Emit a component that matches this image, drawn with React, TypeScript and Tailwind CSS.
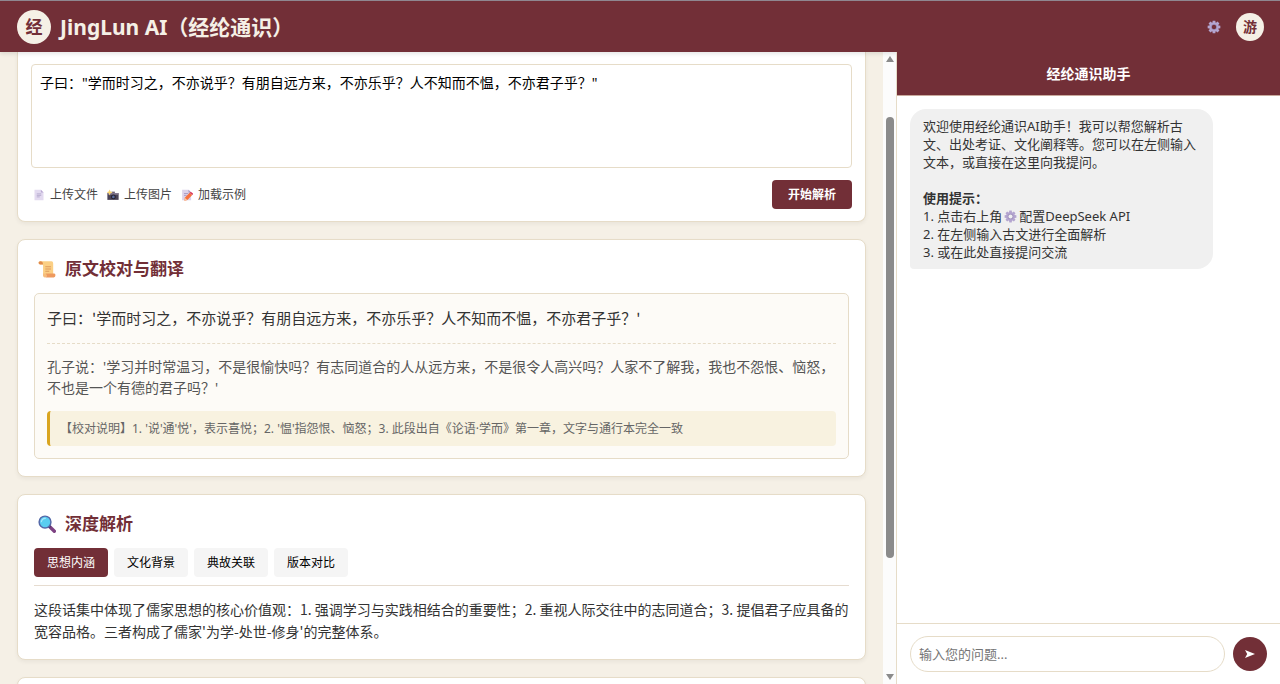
import { useState } from "react";
import type { ReactNode } from "react";

const GEAR_TEETH = [0, 45, 90, 135, 180, 225, 270, 315];

function GearIcon({ className, hole }: { className: string; hole: string }) {
  return (
    <svg viewBox="0 0 32 32" className={className} aria-hidden="true">
      <g fill="#b4a5cf">
        {GEAR_TEETH.map((angle) => (
          <path key={angle} d="M13 1.5h6l1.2 8h-8.4z" transform={`rotate(${angle} 16 16)`} />
        ))}
        <circle cx="16" cy="16" r="10.5" />
      </g>
      <circle cx="16" cy="16" r="7" fill="#9f90bd" />
      <circle cx="16" cy="16" r="5" fill={hole} />
    </svg>
  );
}

function FileIcon() {
  return (
    <svg viewBox="0 0 32 32" className="size-3" aria-hidden="true">
      <path d="M4 2h17l7 7v21H4z" fill="#e3daf0" />
      <path d="M21 2v7h7z" fill="#b9a8d2" />
      <path d="M10 13h12M10 17h12M10 21h8" stroke="#b3a6cb" strokeWidth="2.2" />
    </svg>
  );
}

function CameraIcon() {
  return (
    <svg viewBox="0 0 32 32" className="size-3" aria-hidden="true">
      <path d="M1 11h30v18H1z" fill="#4b4356" />
      <path d="M1 11h30v4H1z" fill="#8d8299" />
      <path d="M12 7h9v4h-9z" fill="#6c6278" />
      <circle cx="17" cy="21" r="6.5" fill="#241f2e" />
      <circle cx="17" cy="21" r="3.5" fill="#5b6b9c" />
      <path d="M7 1l2.400 5.600L15 9l-5.600 2.400L7 17l-2.400-5.600L-1 9l5.600-2.400z" fill="#fbd571" />
    </svg>
  );
}

function MemoIcon() {
  return (
    <svg viewBox="0 0 32 32" className="size-3" aria-hidden="true">
      <path d="M3 2h17l7 7v21H3z" fill="#dcd2ea" />
      <path d="M20 2v7h7z" fill="#a596bf" />
      <path d="M8 12h11M8 17h7" stroke="#a294bd" strokeWidth="2.2" />
      <path d="M10 23L23 10l7 6-13 13-8 2z" fill="#f8703d" />
      <path d="M23 10l3-3 7 6-3 3z" fill="#d83b5c" />
      <path d="M10 23l7 6-8 2z" fill="#f9c9a0" />
    </svg>
  );
}

function ScrollIcon() {
  return (
    <svg viewBox="0 0 32 32" className="size-[18px]" aria-hidden="true">
      <path d="M4 2h20q3 0 3 4v22H9V8H4Q1 8 1 5t3-3z" fill="#fbcf84" />
      <path d="M4 2q5 0 5 6H4Q1 8 1 5t3-3z" fill="#e08a4c" />
      <path d="M12 24h17q2 0 2 3t-3 4H13q3-2 2-5-1-2-3-2z" fill="#ee9a5e" />
      <path d="M9 24h3q3 1 3 4 0 3-3 3-3 0-3-4z" fill="#f6bd7c" />
      <path d="M13 12h10M13 16h10M13 20h7" stroke="#dd9a5e" strokeWidth="1.8" />
    </svg>
  );
}

function SearchIcon() {
  return (
    <svg viewBox="0 0 32 32" className="size-[18px]" aria-hidden="true">
      <path d="M20 20l9 9" stroke="#7d4182" strokeWidth="6" strokeLinecap="round" />
      <path d="M18 18l4 4" stroke="#533566" strokeWidth="4" />
      <circle cx="12.500" cy="12.500" r="10.500" fill="#59cdf0" stroke="#5468a8" strokeWidth="2.600" />
      <path d="M6 12q1-6 7-6" fill="none" stroke="#a6e8fb" strokeWidth="2" strokeLinecap="round" />
    </svg>
  );
}

function CardTitle({ icon, children }: { icon: ReactNode; children: ReactNode }) {
  return (
    <h2 className="mb-[13px] flex items-center gap-[9px] pl-1 text-[17px] leading-[23px] font-bold text-[#722f37]">
      {icon}
      {children}
    </h2>
  );
}

const CARD = "shrink-0 border border-[#e6dcc8] bg-white shadow-[0_2px_4px_rgba(0,0,0,0.05)]";

const UPLOADS = [
  { label: "上传文件", icon: <FileIcon /> },
  { label: "上传图片", icon: <CameraIcon /> },
  { label: "加载示例", icon: <MemoIcon /> },
];

const TABS = ["思想内涵", "文化背景", "典故关联", "版本对比"];

export default function App() {
  const [activeTab, setActiveTab] = useState(TABS[0]);
  const [source, setSource] = useState(
    '子曰："学而时习之，不亦说乎？有朋自远方来，不亦乐乎？人不知而不愠，不亦君子乎？"',
  );

  return (
    <div className="flex h-screen flex-col overflow-hidden bg-[#f5f0e6] font-['Noto_Sans','Noto_Sans_CJK_SC',sans-serif] text-[#333]">
      <header className="z-10 flex h-13 shrink-0 items-center justify-between border-t border-[#8f8790] bg-[#722f37] pr-4 pl-[17px] shadow-[0_2px_4px_rgba(0,0,0,0.1)]">
        <div className="flex items-center gap-[9px]">
          <span className="flex size-[34px] items-center justify-center rounded-full bg-[#f5f0e6] text-[17px] font-bold text-[#722f37]">
            经
          </span>
          <h1 className="text-[21px] leading-7 font-bold text-[#f5f0e6]">JingLun AI（经纶通识）</h1>
        </div>
        <div className="flex items-center gap-[15px]">
          <button type="button" aria-label="设置">
            <GearIcon className="size-[14px]" hole="#722f37" />
          </button>
          <button
            type="button"
            className="flex size-7 items-center justify-center rounded-full bg-[#f5f0e6] text-[14px] font-bold text-[#722f37]"
          >
            游
          </button>
        </div>
      </header>

      <div className="flex min-h-0 flex-1">
        <main className="flex min-w-0 flex-1">
          <div className="flex min-w-0 flex-1 flex-col gap-[17px] overflow-y-auto px-[17px] [scrollbar-width:none]">
            <section className={`${CARD} rounded-b-lg border-t-0 px-[13px] py-3`}>
              <textarea
                aria-label="古文输入"
                value={source}
                onChange={(e) => setSource(e.target.value)}
                className="block h-[104px] w-full resize-none rounded border border-[#e6dcc8] bg-white px-2 py-2 text-[14px] leading-5 text-black outline-none"
              />
              <div className="mt-3 flex items-center justify-between">
                <div className="flex gap-[9px] pl-[2px]">
                  {UPLOADS.map((item) => (
                    <button
                      key={item.label}
                      type="button"
                      className="flex items-center gap-[5px] text-[12px] leading-5 text-[#444]"
                    >
                      {item.icon}
                      {item.label}
                    </button>
                  ))}
                </div>
                <button
                  type="button"
                  className="rounded bg-[#722f37] px-4 py-[5px] text-[12px] leading-[19px] font-bold text-white"
                >
                  开始解析
                </button>
              </div>
            </section>

            <section className={`${CARD} rounded-lg px-4 py-[17px]`}>
              <CardTitle icon={<ScrollIcon />}>原文校对与翻译</CardTitle>
              <div className="rounded-[5px] border border-[#e6dcc8] bg-[#fdfbf7] px-3 py-3">
                <p className="border-b border-dashed border-[#e6dcc8] pb-[13px] font-[KaiTi,STKaiti,'Noto_Sans_CJK_SC',serif] text-[15px] leading-6">
                  子曰：'学而时习之，不亦说乎？有朋自远方来，不亦乐乎？人不知而不愠，不亦君子乎？'
                </p>
                <p className="mt-3 text-[14px] leading-[21px] text-[#555]">
                  孔子说：'学习并时常温习，不是很愉快吗？有志同道合的人从远方来，不是很令人高兴吗？人家不了解我，我也不怨恨、恼怒，不也是一个有德的君子吗？'
                </p>
                <p className="mt-[13px] rounded border-l-3 border-[#d9a520] bg-[#f8f2e0] px-[10px] py-2 text-[12px] leading-[19px] text-[#666]">
                  【校对说明】1. '说'通'悦'，表示喜悦；2. '愠'指怨恨、恼怒；3. 此段出自《论语·学而》第一章，文字与通行本完全一致
                </p>
              </div>
            </section>

            <section className={`${CARD} rounded-lg px-4 py-[17px]`}>
              <CardTitle icon={<SearchIcon />}>深度解析</CardTitle>
              <div role="tablist" className="flex gap-[6px] border-b border-[#e6dcd0] pb-2">
                {TABS.map((tab) => (
                  <button
                    key={tab}
                    type="button"
                    role="tab"
                    aria-selected={tab === activeTab}
                    onClick={() => setActiveTab(tab)}
                    className={`rounded px-[13px] py-[5px] text-[12px] leading-[19px] ${
                      tab === activeTab ? "bg-[#722f37] text-white" : "bg-[#f5f5f5] text-black"
                    }`}
                  >
                    {tab}
                  </button>
                ))}
              </div>
              <p className="mt-3 font-['Noto_Sans_CJK_SC',sans-serif] text-[14px] leading-[22px]">
                这段话集中体现了儒家思想的核心价值观：1. 强调学习与实践相结合的重要性；2. 重视人际交往中的志同道合；3. 提倡君子应具备的宽容品格。三者构成了儒家'为学-处世-修身'的完整体系。
              </p>
            </section>

            <section className={`${CARD} h-24 rounded-lg`} />
          </div>

          <div
            aria-hidden="true"
            className="flex w-[13px] shrink-0 flex-col items-center justify-between bg-[#fcfcfc] py-1"
          >
            <svg viewBox="0 0 8 6" className="h-[6px] w-2">
              <path d="M4 0l4 6H0z" fill="#8b8b8b" />
            </svg>
            <span className="flex w-2 flex-1 flex-col">
              <span className="basis-[9%]" />
              <span className="basis-[72%] rounded-full bg-[#8b8b8b]" />
            </span>
            <svg viewBox="0 0 8 6" className="h-[6px] w-2">
              <path d="M4 6L0 0h8z" fill="#8b8b8b" />
            </svg>
          </div>
        </main>

        <aside className="z-10 flex w-3/10 shrink-0 flex-col border-l border-[#e6dcc8] bg-white">
          <h2 className="border-b border-[#c9a99c] bg-[#722f37] pt-3 pb-[11px] text-center text-[14px] leading-5 font-bold text-white">
            经纶通识助手
          </h2>
          <div className="min-h-0 flex-1 overflow-y-auto p-[13px]">
            <div className="max-w-[85%] rounded-2xl rounded-bl bg-[#f0f0f0] px-[13px] py-2 text-[13px] leading-[18px]">
              <p>欢迎使用经纶通识AI助手！我可以帮您解析古文、出处考证、文化阐释等。您可以在左侧输入文本，或直接在这里向我提问。</p>
              <p className="mt-[18px] font-bold">使用提示：</p>
              <p>
                1. 点击右上角
                <GearIcon className="mx-[2px] inline size-[13px] align-[-2px]" hole="#f0f0f0" />
                配置DeepSeek API
              </p>
              <p>2. 在左侧输入古文进行全面解析</p>
              <p>3. 或在此处直接提问交流</p>
            </div>
          </div>
          <form
            onSubmit={(e) => e.preventDefault()}
            className="flex items-center gap-2 border-t border-[#e6dcc8] px-[13px] py-3"
          >
            <input
              type="text"
              aria-label="输入您的问题"
              placeholder="输入您的问题..."
              className="h-9 min-w-0 flex-1 rounded-full border border-[#e6dcc8] bg-white px-2 text-[13px] outline-none placeholder:text-[#757575]"
            />
            <button
              type="submit"
              aria-label="发送"
              className="flex size-[34px] shrink-0 items-center justify-center rounded-full bg-[#722f37]"
            >
              <svg viewBox="0 0 10 8" className="h-2 w-[10px]" aria-hidden="true">
                <path d="M0 0l10 4L0 8l2.200-4z" fill="#fff" />
              </svg>
            </button>
          </form>
        </aside>
      </div>
    </div>
  );
}
